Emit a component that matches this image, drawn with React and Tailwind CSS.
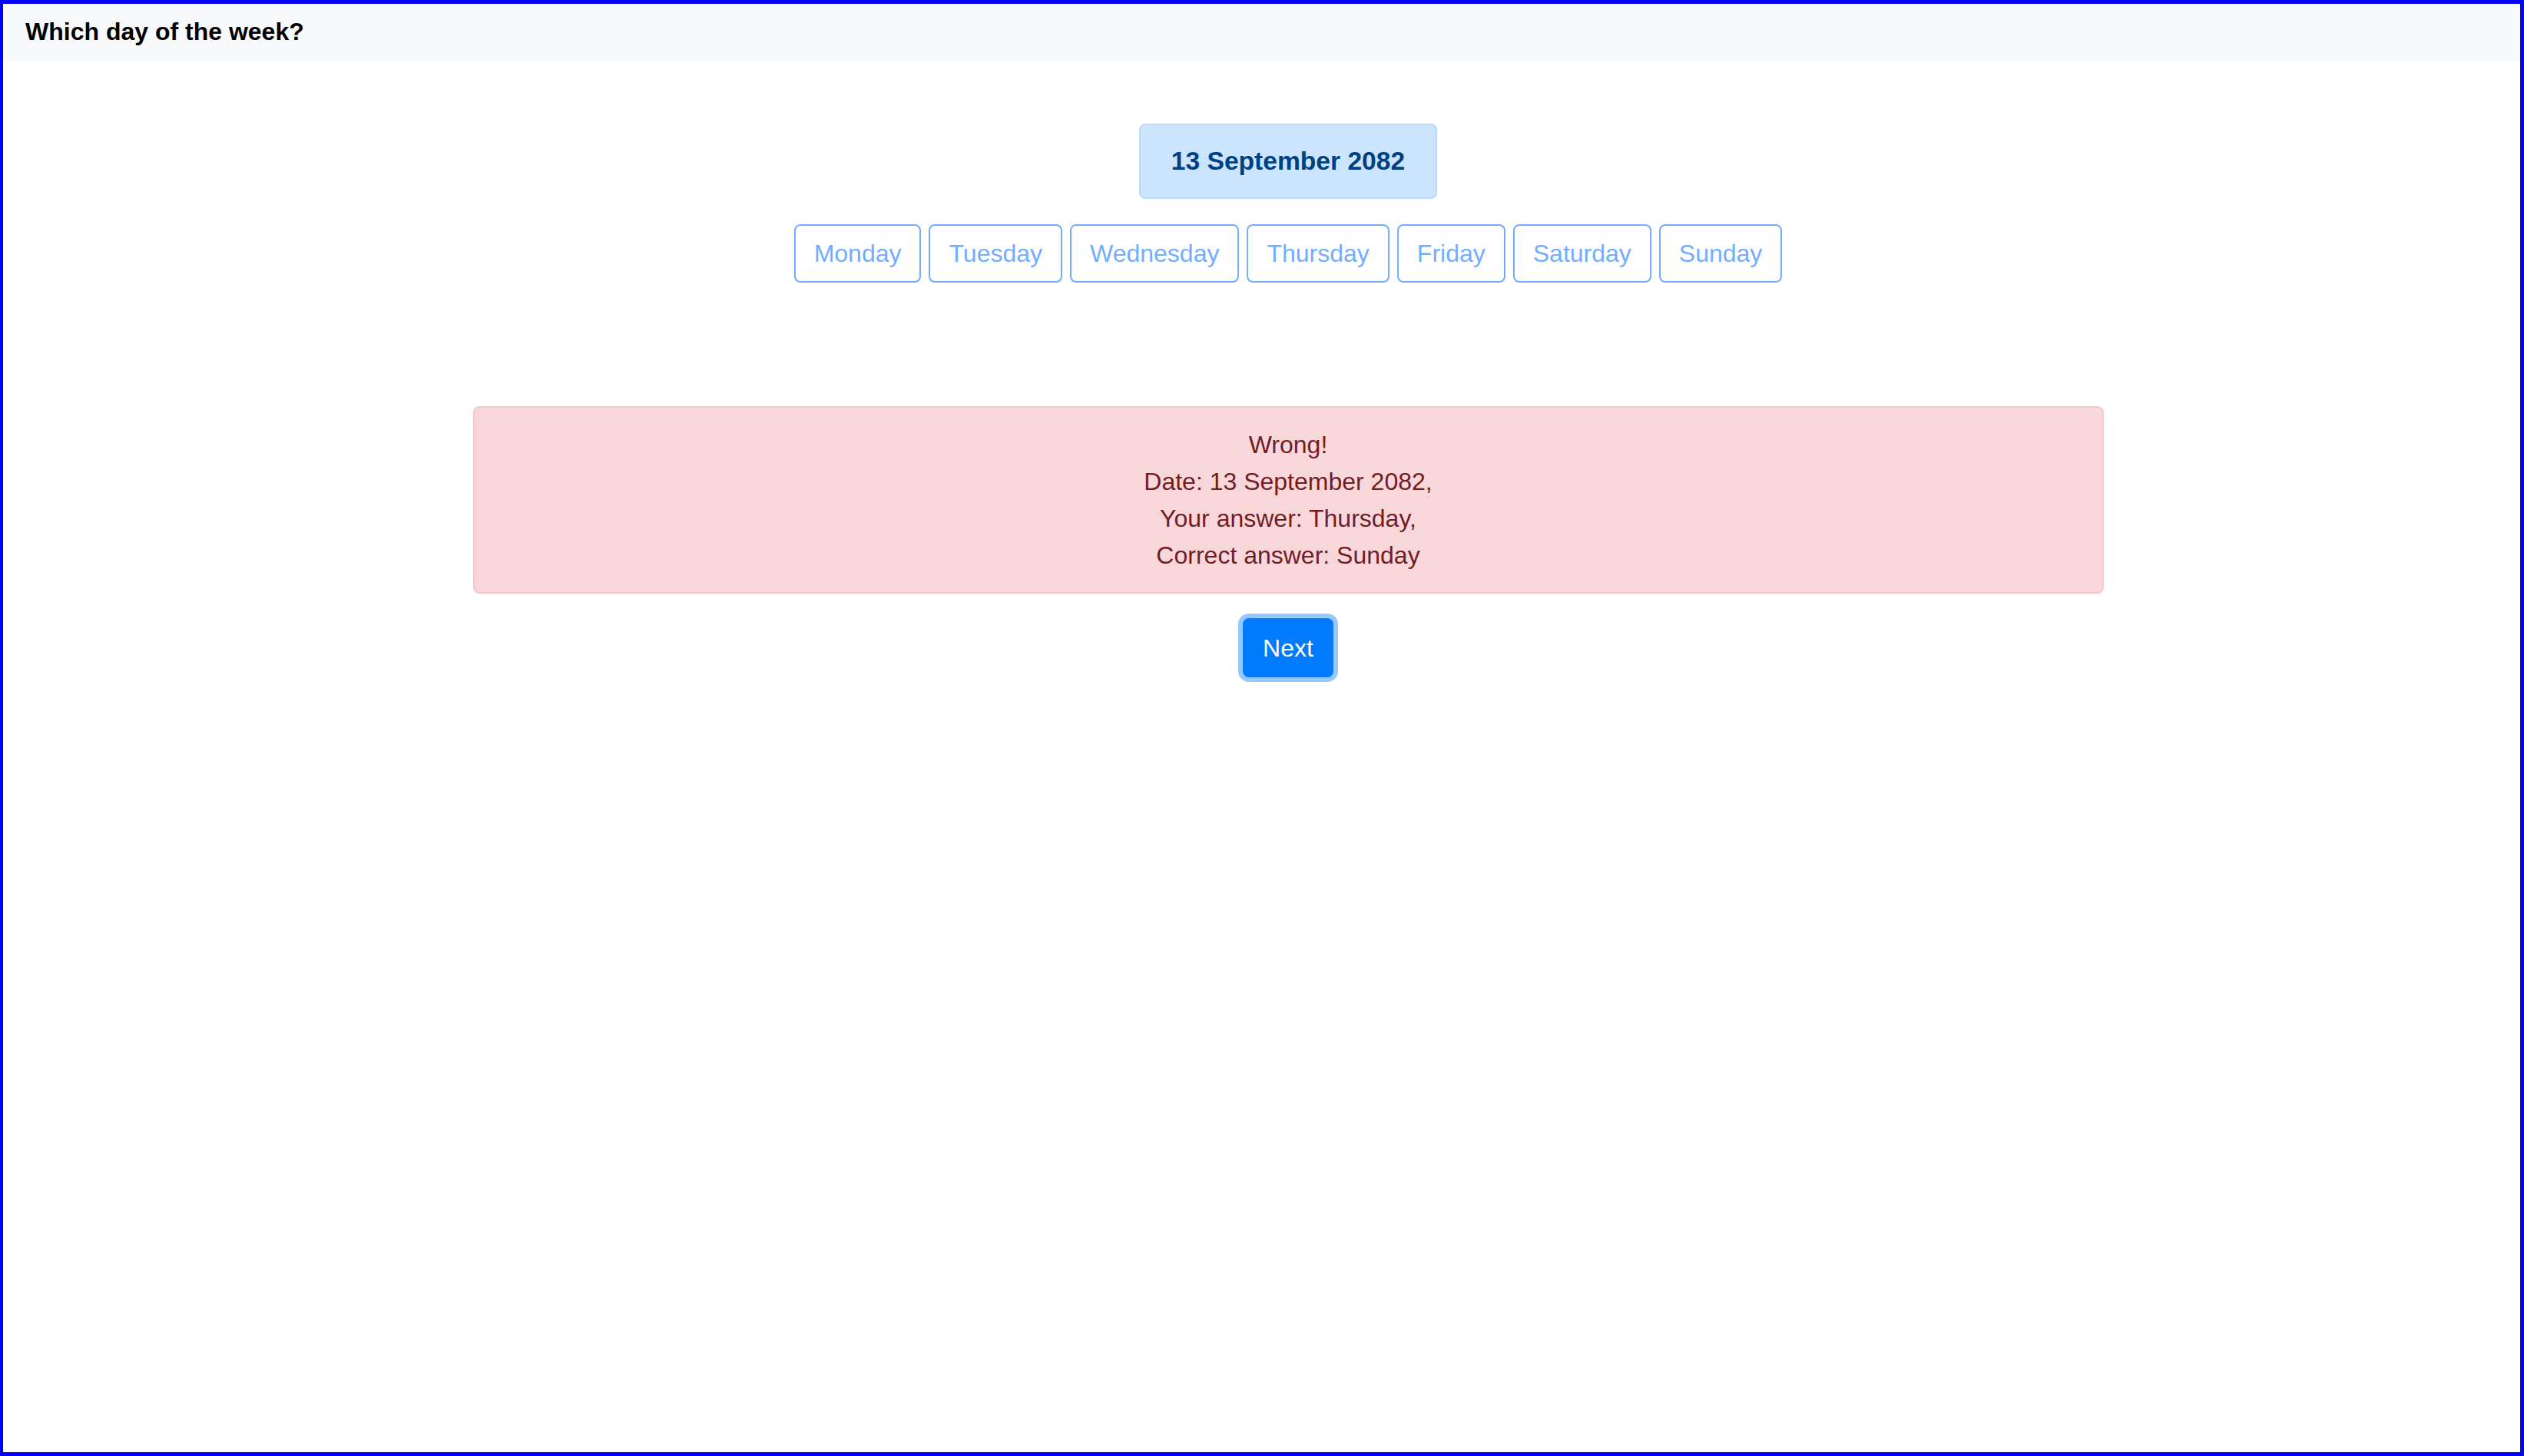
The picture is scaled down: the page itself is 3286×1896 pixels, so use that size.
import React from 'react';

const DAYS = ['Monday', 'Tuesday', 'Wednesday', 'Thursday', 'Friday', 'Saturday', 'Sunday'];

export default function App() {
  const date = '13 September 2082';
  const answer = 'Thursday';
  const correct = 'Sunday';

  return (
    <div className="h-[1896px] w-full bg-white border-l-[4px] border-t-[5px] border-r-[5px] border-b-[5px] border-[#0000ff] font-['Liberation_Sans',Arial,sans-serif] text-[#212529]">
      {/* Barra superior */}
      <div className="h-[75px] bg-[#f8f9fa] flex items-center pl-[29px] pb-[3px]">
        <h1 className="text-[32px] font-bold text-black leading-none">Which day of the week?</h1>
      </div>

      <div className="flex flex-col items-center pl-[69px]">
        {/* Fecha */}
        <div className="mt-[81px] h-[98px] px-[40px] flex items-center rounded-[8px] border-2 border-[#b8daff] bg-[#cce5ff] text-[#004085]">
          <span className="text-[33.6px] font-bold">{date}</span>
        </div>

        {/* Botones de días */}
        <div className="mt-[33px] flex gap-[10px]">
          {DAYS.map((d) => (
            <button
              key={d}
              type="button"
              disabled
              className="h-[76px] px-[24px] rounded-[8px] border-2 border-[#72adff] bg-white text-[#72adff] text-[32px] leading-[48px]"
            >
              {d}
            </button>
          ))}
        </div>

        {/* Resultado */}
        <div className="mt-[161px] w-[2123px] py-[24px] rounded-[8px] border-2 border-[#f5c6cb] bg-[#f8d7da] text-[#721c24] text-[32px] leading-[48px] text-center">
          <div>Wrong!</div>
          <div>Date: {date},</div>
          <div>Your answer: {answer},</div>
          <div>Correct answer: {correct}</div>
        </div>

        <button
          type="button"
          className="mt-[32px] h-[77px] px-[24px] rounded-[8px] border-2 border-[#007bff] bg-[#007bff] text-white text-[32px] leading-[48px] shadow-[0_0_0_6px_rgba(0,123,255,0.42)]"
        >
          Next
        </button>
      </div>
    </div>
  );
}
